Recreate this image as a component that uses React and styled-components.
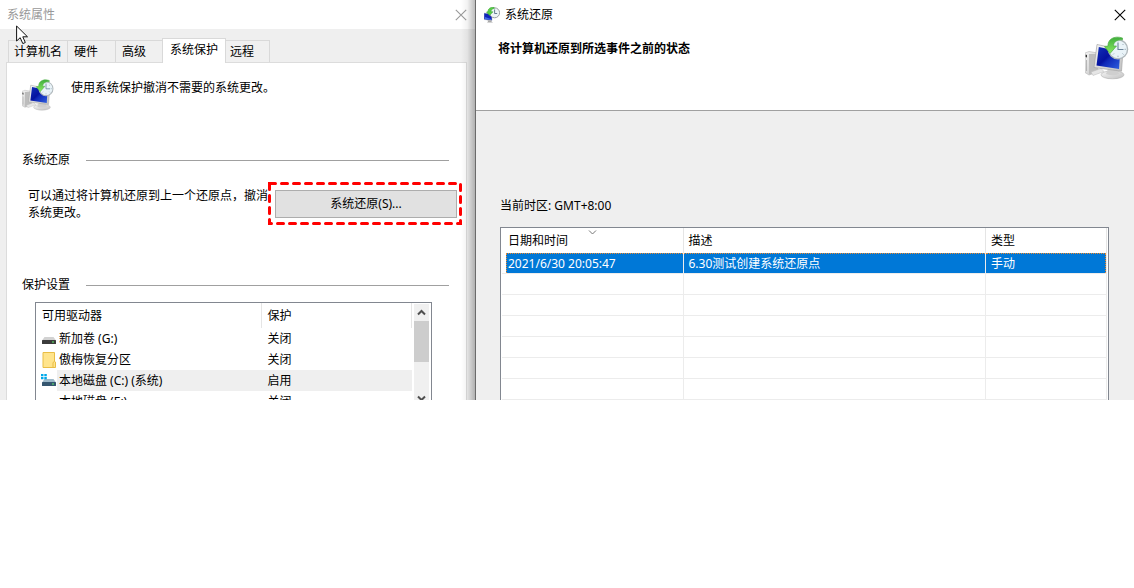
import React from "react";
import styled, { createGlobalStyle, css } from "styled-components";

const GlobalStyle = createGlobalStyle`
  * { box-sizing: border-box; }
  body {
    margin: 0;
    background: #fff;
    color: #000;
    font: 12px/18px "Noto Sans", "Noto Sans CJK SC", sans-serif;
  }
  h1, h2, p { margin: 0; font-size: 12px; font-weight: 400; }
  button { font: inherit; color: inherit; }
  table { border-spacing: 0; table-layout: fixed; }
  th, td { font-weight: 400; text-align: left; white-space: nowrap; }
  svg { display: block; }
`;

const Screen = styled.main`
  position: relative;
  display: grid;
  grid-template-columns: minmax(0, 475fr) minmax(0, 659fr);
  max-height: 400px;
  overflow: hidden;
`;

const Window = styled.section`
  position: relative;
  display: flex;
  flex-direction: column;
  min-height: 400px;
  background: #efefef;
`;

const PropertiesWindow = styled(Window)`
  &::after {
    content: "";
    position: absolute;
    inset: 0 0 0 auto;
    width: 14px;
    background: linear-gradient(to right, rgba(0, 0, 0, 0), rgba(0, 0, 0, 0.05) 45%, rgba(0, 0, 0, 0.26));
    pointer-events: none;
  }
`;

const RestoreWindow = styled(Window)`
  border-left: 1px solid #6b6b6b;
`;

const TitleBar = styled.header`
  display: flex;
  align-items: center;
  gap: 5px;
  height: 29px;
  padding: 0 8px 0 ${(p) => (p.$inactive ? 7 : 8)}px;
  background: #fff;
  color: ${(p) => (p.$inactive ? "#999" : "#000")};
`;

const CloseButton = styled.button`
  margin-left: auto;
  padding: 0;
  border: 0;
  background: none;
`;

const Tabs = styled.div`
  display: flex;
  align-items: flex-end;
  height: 33px;
  padding-left: 8px;
`;

const Tab = styled.button`
  position: relative;
  width: ${(p) => p.$width}px;
  height: 22px;
  padding: 0 0 0 6px;
  border: 1px solid #d9d9d9;
  border-width: 1px 1px 0 0;
  background: #f0f0f0;
  text-align: left;
  line-height: 20px;
  white-space: nowrap;
  &:first-child { border-left-width: 1px; padding-left: 5px; }
  &:last-child { padding-left: 4px; }
  ${(p) =>
    p.$active &&
    css`
      height: 25px;
      margin: 0 0 -1px -1px;
      padding-left: 7px;
      border-left-width: 1px;
      background: #fff;
      padding-bottom: 3px;
      z-index: 1;
    `}
`;

const Panel = styled.div`
  flex: 1;
  margin: 0 8px 0 6px;
  padding: 16px 4px 0 15px;
  border: 1px solid #dcdcdc;
  border-bottom: 0;
  background: #fff;
`;

const Intro = styled.div`
  display: flex;
  gap: 17px;
  height: 72px;
`;

const SectionTitle = styled.h2`
  display: flex;
  align-items: center;
  gap: 16px;
  padding-right: 13px;
  line-height: 18px;
  &::after {
    content: "";
    flex: 1;
    border-top: 1px solid #a0a0a0;
  }
`;

const RestoreRow = styled.div`
  display: flex;
  margin: 13px 0 51px;
`;

const RestoreText = styled.p`
  flex: 0 0 246px;
  padding: 5px 0 0 6px;
  line-height: 17px;
`;

const Highlight = styled.div`
  position: relative;
  flex: 1;
  padding: 8px 5px 7px 7px;
`;

const DashFrame = styled.svg`
  position: absolute;
  inset: 0;
  width: 100%;
  height: 100%;
  pointer-events: none;
  rect {
    width: calc(100% - 3px);
    height: calc(100% - 3px);
  }
`;

const PushButton = styled.button`
  display: block;
  width: 100%;
  height: 28px;
  padding: 0;
  border: 1px solid #adadad;
  background: #e1e1e1;
`;

const DriveList = styled.div`
  display: flex;
  gap: 2px;
  height: 107px;
  margin: 8px 30px 0 13px;
  padding-right: 2px;
  border: 1px solid #828790;
  overflow: hidden;
`;

const DriveTable = styled.table`
  flex: 1;
  th {
    height: 25px;
    padding: 0 0 0 6px;
    border-right: 1px solid #e5e5e5;
  }
  td { height: 21px; padding: 0; }
  td + td { padding-left: 6px; }
  tr[aria-selected="true"] td + td { background: #efefef; }
`;

const DriveCell = styled.div`
  display: flex;
  align-items: center;
  height: 21px;
`;

const DriveIcon = styled.span`
  width: 21px;
  padding-left: 5px;
`;

const DriveName = styled.span`
  flex: 1;
  padding-left: 2px;
  line-height: 21px;
  background: ${(p) => (p.$selected ? "#efefef" : "none")};
`;

const ScrollBar = styled.div`
  display: flex;
  flex-direction: column;
  width: 15px;
  margin: 1px 0;
  background: #f0f0f0;
`;

const ScrollButton = styled.button`
  display: grid;
  place-items: center;
  width: 15px;
  height: 17px;
  padding: 0;
  border: 0;
  background: none;
`;

const ScrollThumb = styled.div`
  height: 41px;
  margin-bottom: auto;
  background: #cdcdcd;
`;

const Banner = styled.div`
  display: flex;
  justify-content: space-between;
  height: 82px;
  padding: 7px 5px 0 22px;
  border-bottom: 1px solid #a0a0a0;
  background: #fff;
`;

const BannerTitle = styled.h2`
  padding-top: 4px;
  font-weight: 700;
`;

const RestoreBody = styled.div`
  flex: 1;
  padding: 86px 25px 0 24px;
`;

const PointList = styled.div`
  margin-top: 12px;
  padding: 0 1px;
  border: 1px solid #828790;
  background: #fff;
`;

const PointTable = styled.table`
  width: 100%;
  th {
    position: relative;
    height: 25px;
    padding: 0 0 0 5px;
    border-right: 1px solid #e5e5e5;
  }
  th:first-child { padding-left: 6px; }
  td {
    height: 21px;
    padding: 0;
    border: 1px solid #ececec;
    border-width: 0 1px 1px 0;
  }
`;

const SelectedFill = styled.div`
  height: 20px;
  margin-left: ${(p) => (p.$first ? 4 : 0)}px;
  padding-left: ${(p) => (p.$first ? 1 : 5)}px;
  border: 0 dotted #f08a2c;
  border-top-width: 1px;
  border-left-width: ${(p) => (p.$first ? 1 : 0)}px;
  border-right-width: ${(p) => (p.$last ? 1 : 0)}px;
  background: #0078d7;
  color: #fff;
  line-height: 19px;
`;

const SortMark = styled.svg`
  position: absolute;
  top: 2px;
  left: 50%;
  margin-left: -4px;
`;

const Pointer = styled.svg`
  position: absolute;
  top: 25px;
  left: 16px;
  z-index: 2;
  pointer-events: none;
`;

function CloseIcon({ color }) {
  return (
    <svg width="12" height="12" viewBox="0 0 12 12" fill="none" stroke={color} strokeWidth="1.1">
      <path d="M.8.8 11.2 11.2M11.2.8.8 11.2" />
    </svg>
  );
}

function RestoreIcon({ id, size }) {
  return (
    <svg width={size} height={size} viewBox="0 0 44 44">
      <defs>
        <linearGradient id={id + "s"} x1="0" y1="0" x2="1" y2="1">
          <stop offset="0" stopColor="#1230b8" />
          <stop offset=".45" stopColor="#0512a0" />
          <stop offset=".55" stopColor="#1029b8" />
          <stop offset="1" stopColor="#2f60e0" />
        </linearGradient>
        <linearGradient id={id + "m"} x1="0" y1="0" x2="1" y2="1">
          <stop offset="0" stopColor="#f6f6f6" />
          <stop offset="1" stopColor="#c0c0c0" />
        </linearGradient>
        <linearGradient id={id + "g"} x1="0" y1="0" x2="0" y2="1">
          <stop offset="0" stopColor="#3fae3c" />
          <stop offset="1" stopColor="#8aea62" />
        </linearGradient>
      </defs>
      <path d="M0 17 4 15.500 13 17V36L4 39 0 36.500Z" fill={`url(#${id}m)`} stroke="#b5b5b5" strokeWidth=".6" />
      <path d="M4 18 13 18V36L4 38.500Z" fill="#bdbdbd" />
      <path d="M.6 18.500 2 19V21.500L.6 21Z" fill="#333" />
      <path d="M1.500 24V35" stroke="#a0a0a0" strokeWidth=".7" />
      <path d="M6 36 16 32.500 19 35.500 8 39.500Z" fill="#e6e6e6" stroke="#bbb" strokeWidth=".5" />
      <ellipse cx="27.500" cy="38.800" rx="11.500" ry="4" fill={`url(#${id}m)`} stroke="#b0b0b0" strokeWidth=".6" />
      <path d="M23 33H32L34 38Q28 40.500 21 38Z" fill="#cfcfcf" />
      <path d="M12 8.500 38 14 36.500 35.200 9 31.500Z" fill={`url(#${id}m)`} stroke="#a5a5a5" strokeWidth=".7" />
      <path d="M13.800 11 35.200 15.500 34 33 11.500 29.500Z" fill={`url(#${id}s)`} />
      <circle cx="33" cy="13.300" r="9.600" fill="#e9f3f8" stroke="#b0b8bc" strokeWidth="1.400" />
      <path d="M33 5.500v1.500M33 19.700v1.500M39.500 13.300H41M25.500 13.300h1.500M38.500 8l-1 1M38.500 18.500l-1-1M28 18.500l1-1" stroke="#9fb2bd" strokeWidth="1" />
      <path d="M33 7V13.500H38.500" fill="none" stroke="#6b8499" strokeWidth="1.100" />
      <path d="M37.500 2C29-.8 22.500 3.500 23 10L19.500 10.500 25 17.500 31.500 10H28.500C28.500 6 32 3.500 37.500 3.800Z" fill={`url(#${id}g)`} stroke="#4fae46" strokeWidth=".7" />
    </svg>
  );
}

function SmallRestoreIcon() {
  return (
    <svg width="16" height="16" viewBox="0 0 16 16">
      <path d="M0 6 8 7V13.500L0 12.500Z" fill="#1024ba" stroke="#b7bcc6" strokeWidth=".5" />
      <path d="M1 10 7 12V13L1 12Z" fill="#3c6ce8" />
      <path d="M3.500 13.300h4V14.500L9 15.500H3L4 14.500Z" fill="#a9a9a9" />
      <circle cx="10.600" cy="5.800" r="5" fill="#edf3f6" stroke="#9a9fa3" strokeWidth="1" />
      <path d="M10.600 2.500V6.500H13.200" fill="none" stroke="#566f84" strokeWidth=".9" />
      <path d="M10 .4C6 0 4 2 4 4.500L2.500 5 5.500 8.500 9 4.800H7C7 3 8 1.700 10.500 1.300Z" fill="#58cf45" stroke="#369a32" strokeWidth=".5" />
    </svg>
  );
}

function DiskGlyph({ system }) {
  return (
    <svg width="16" height="16" viewBox="0 0 16 16">
      <path d="M3.500 6H12.500L15 9.500H1Z" fill={system ? "#9db9c9" : "#d2d2d2"} />
      <rect x="1" y="9" width="14" height="4" rx=".5" fill={system ? "#35566f" : "#3b3b3b"} />
      <rect x="11" y="10.500" width="2" height="1" fill="#5df06a" />
      {system && <path d="M0 1h2.500v2.200H0ZM3.300 1h2.500v2.200H3.300ZM0 4h2.500v2.200H0ZM3.300 4h2.500v2.200H3.300Z" fill="#00a9ea" />}
    </svg>
  );
}

function FolderGlyph() {
  return (
    <svg width="16" height="16" viewBox="0 0 16 16">
      <path d="M2 .5H13.500V9.500L14.500 10V15.500H2Z" fill="#ffe48c" stroke="#e9bd45" />
      <path d="M12 15.500V10.500L13.500 9.500" fill="none" stroke="#e9bd45" />
    </svg>
  );
}

function Chevron({ down }) {
  return (
    <svg width="9" height="7" viewBox="0 0 9 7" fill="none" stroke="#505050" strokeWidth="2">
      <path d={down ? "M1 1.500 4.500 5 8 1.500" : "M1 5.500 4.500 2 8 5.500"} />
    </svg>
  );
}

const tabs = [
  { label: "计算机名", width: 60 },
  { label: "硬件", width: 48 },
  { label: "高级", width: 47 },
  { label: "系统保护", width: 64, active: true },
  { label: "远程", width: 44 },
];

const drives = [
  { name: "新加卷 (G:)", status: "关闭", icon: <DiskGlyph /> },
  { name: "傲梅恢复分区", status: "关闭", icon: <FolderGlyph /> },
  { name: "本地磁盘 (C:) (系统)", status: "启用", icon: <DiskGlyph system />, selected: true },
  { name: "本地磁盘 (E:)", status: "关闭", icon: <DiskGlyph /> },
];

const emptyRows = [1, 2, 3, 4, 5, 6];

export default function App() {
  return (
    <>
      <GlobalStyle />
      <Screen>
        <PropertiesWindow>
          <TitleBar $inactive>
            <h1>系统属性</h1>
            <CloseButton aria-label="关闭">
              <CloseIcon color="#999" />
            </CloseButton>
          </TitleBar>
          <Tabs role="tablist">
            {tabs.map((t) => (
              <Tab key={t.label} role="tab" aria-selected={!!t.active} $width={t.width} $active={t.active}>
                {t.label}
              </Tab>
            ))}
          </Tabs>
          <Panel role="tabpanel">
            <Intro>
              <RestoreIcon id="a" size={32} />
              <p>使用系统保护撤消不需要的系统更改。</p>
            </Intro>
            <SectionTitle>系统还原</SectionTitle>
            <RestoreRow>
              <RestoreText>可以通过将计算机还原到上一个还原点，撤消系统更改。</RestoreText>
              <Highlight>
                <PushButton>系统还原(S)...</PushButton>
                <DashFrame>
                  <rect x="1.500" y="1.500" fill="none" stroke="#f00" strokeWidth="3" strokeLinecap="round" strokeDasharray="6 6" />
                </DashFrame>
              </Highlight>
            </RestoreRow>
            <SectionTitle>保护设置</SectionTitle>
            <DriveList>
              <DriveTable>
                <colgroup>
                  <col style={{ width: "60%" }} />
                  <col style={{ width: "40%" }} />
                </colgroup>
                <thead>
                  <tr>
                    <th>可用驱动器</th>
                    <th>保护</th>
                  </tr>
                </thead>
                <tbody>
                  {drives.map((d) => (
                    <tr key={d.name} aria-selected={!!d.selected}>
                      <td>
                        <DriveCell>
                          <DriveIcon>{d.icon}</DriveIcon>
                          <DriveName $selected={d.selected}>{d.name}</DriveName>
                        </DriveCell>
                      </td>
                      <td>{d.status}</td>
                    </tr>
                  ))}
                </tbody>
              </DriveTable>
              <ScrollBar>
                <ScrollButton aria-label="向上滚动">
                  <Chevron />
                </ScrollButton>
                <ScrollThumb />
                <ScrollButton aria-label="向下滚动">
                  <Chevron down />
                </ScrollButton>
              </ScrollBar>
            </DriveList>
          </Panel>
        </PropertiesWindow>

        <RestoreWindow>
          <TitleBar>
            <SmallRestoreIcon />
            <h1>系统还原</h1>
            <CloseButton aria-label="关闭">
              <CloseIcon color="#000" />
            </CloseButton>
          </TitleBar>
          <Banner>
            <BannerTitle>将计算机还原到所选事件之前的状态</BannerTitle>
            <RestoreIcon id="b" size={44} />
          </Banner>
          <RestoreBody>
            <p>当前时区: GMT+8:00</p>
            <PointList>
              <PointTable>
                <colgroup>
                  <col style={{ width: "30%" }} />
                  <col style={{ width: "50%" }} />
                  <col style={{ width: "20%" }} />
                </colgroup>
                <thead>
                  <tr>
                    <th>
                      日期和时间
                      <SortMark width="9" height="5" viewBox="0 0 9 5" fill="none" stroke="#777">
                        <path d="M1 .5 4.500 4 8 .5" />
                      </SortMark>
                    </th>
                    <th>描述</th>
                    <th>类型</th>
                  </tr>
                </thead>
                <tbody>
                  <tr aria-selected="true">
                    <td>
                      <SelectedFill $first>2021/6/30 20:05:47</SelectedFill>
                    </td>
                    <td>
                      <SelectedFill>6.30测试创建系统还原点</SelectedFill>
                    </td>
                    <td>
                      <SelectedFill $last>手动</SelectedFill>
                    </td>
                  </tr>
                  {emptyRows.map((n) => (
                    <tr key={n}>
                      <td />
                      <td />
                      <td />
                    </tr>
                  ))}
                </tbody>
              </PointTable>
            </PointList>
          </RestoreBody>
        </RestoreWindow>

        <Pointer width="13" height="20" viewBox="0 0 13 20">
          <path d="M.6 1V16L4.200 12.700 6.800 18.600 9.300 17.500 6.800 11.800H11.500Z" fill="#fff" stroke="#111" />
        </Pointer>
      </Screen>
    </>
  );
}
